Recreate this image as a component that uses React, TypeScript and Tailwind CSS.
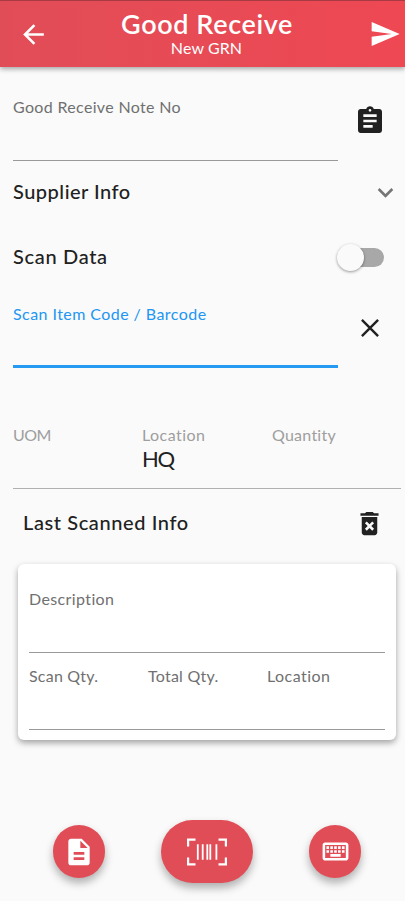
import React, { useState } from "react";
import {
  MdArrowBack,
  MdAssignment,
  MdDeleteForever,
  MdDescription,
  MdExpandMore,
  MdOutlineKeyboard,
  MdSend,
} from "react-icons/md";

interface FieldLabelProps {
  text: string;
  className: string;
}

const FieldLabel: React.FC<FieldLabelProps> = ({ text, className }) => (
  <span className={`block h-5 whitespace-nowrap text-[16px] leading-5 ${className}`}>{text}</span>
);

const ClearIcon = () => (
  <svg width="18" height="18" viewBox="0 0 18 18" fill="none" stroke="#212121" strokeWidth="2.4">
    <path d="M0.9 0.9L17.1 17.1M17.1 0.9L0.9 17.1" />
  </svg>
);

const BarcodeIcon = () => (
  <svg width="40" height="28" viewBox="0 0 40 28" fill="none" stroke="#fff">
    <path d="M1.1 8.5V1.6H8.5M31.5 1.6H38.9V8.5M38.9 19.5V26.4H31.5M8.5 26.4H1.1V19.5" strokeWidth="2.2" />
    <path d="M10.8 6.3V21.7M15.7 6.3V21.7M20.3 6.3V21.7M23.3 6.3V21.7M29.4 6.3V21.7" strokeWidth="1.8" />
  </svg>
);

export default function App() {
  const [scanData, setScanData] = useState(false);

  return (
    <div className="flex h-[901px] w-[405px] flex-col overflow-hidden bg-[#fafafa] font-['Lato',sans-serif] text-[#212121]">
      {/* App bar */}
      <header className="flex h-[67px] shrink-0 items-center border-t border-[#a83a43] bg-linear-to-r from-[#e14d57] to-[#ee4853] pr-1 pl-[17px] text-white shadow-[0_2px_5px_rgba(0,0,0,0.35)]">
        <button className="flex w-8 justify-center" aria-label="Back">
          <MdArrowBack size={31} />
        </button>
        <div className="flex flex-1 flex-col items-center pr-[4px] pb-[3px]">
          <h1 className="h-[31px] text-[27px] leading-[31px] font-semibold tracking-[0.6px] whitespace-nowrap">Good Receive</h1>
          <p className="h-[18px] pr-[1px] text-[16px] leading-[18px] tracking-[0.1px]">New GRN</p>
        </div>
        <button className="flex w-8 justify-center" aria-label="Send">
          <MdSend size={32} />
        </button>
      </header>

      <main className="flex flex-1 flex-col">
        {/* Note number */}
        <div className="flex h-[94px] shrink-0 pl-[13px]">
          <div className="w-[325px] border-b border-[#999] pt-[30px]">
            <FieldLabel text="Good Receive Note No" className="tracking-[0.33px] text-[#707070]" />
          </div>
          <button className="mt-[38px] ml-[15.5px] flex h-8 w-8 justify-center" aria-label="Notes">
            <MdAssignment size={32} />
          </button>
        </div>

        <button className="flex h-[64px] shrink-0 items-center justify-between pr-1 pb-[1px] pl-[13px]">
          <span className="pb-[3px] text-[20px] font-medium tracking-[0.5px]">Supplier Info</span>
          <MdExpandMore size={31} className="text-[#757575]" />
        </button>

        <div className="flex h-[66px] shrink-0 items-center justify-between pr-[21px] pb-[2px] pl-[13px]">
          <span className="pb-[2px] text-[20px] font-medium tracking-[0.68px]">Scan Data</span>
          <button
            role="switch"
            aria-checked={scanData}
            aria-label="Scan Data"
            onClick={() => setScanData(!scanData)}
            className="flex h-[19px] w-[42px] items-center rounded-full bg-[#a8a8a8]"
          >
            <span
              className={`h-[27px] w-[27px] shrink-0 rounded-full bg-[#fafafa] shadow-[0_1px_3px_rgba(0,0,0,0.4)] ${scanData ? "ml-[20px]" : "-ml-[5px]"}`}
            />
          </button>
        </div>

        {/* Barcode entry */}
        <div className="flex h-[77px] shrink-0 pl-[13px]">
          <div className="w-[325px] border-b-[3px] border-[#2699f2] pt-[13px]">
            <FieldLabel text="Scan Item Code / Barcode" className="tracking-[0.44px] text-[#2196f3]" />
          </div>
          <button className="mt-[28px] ml-[22px] flex h-[18px] w-[19px] justify-center" aria-label="Clear">
            <ClearIcon />
          </button>
        </div>

        <div className="mr-1 ml-[13px] flex h-[121px] shrink-0 border-b border-[#b0b0b0] pt-[57px] text-[#9e9e9e]">
          <div className="w-[129px]">
            <FieldLabel text="UOM" className="tracking-[-0.5px]" />
          </div>
          <div className="w-[130px]">
            <FieldLabel text="Location" className="tracking-[0.45px]" />
            <span className="block text-[22px] leading-7 tracking-[-1.2px] text-[#212121]">HQ</span>
          </div>
          <FieldLabel text="Quantity" className="tracking-[0.25px]" />
        </div>

        <div className="flex h-[69px] shrink-0 items-center justify-between pr-5 pl-[23px]">
          <h2 className="pb-[3px] text-[20px] font-medium tracking-[0.6px]">Last Scanned Info</h2>
          <button aria-label="Delete scanned item">
            <MdDeleteForever size={31} />
          </button>
        </div>

        {/* Last scanned card */}
        <section className="mt-[6px] mr-[9px] ml-[18px] flex h-[176px] shrink-0 flex-col rounded-[6px] bg-white px-[11px] text-[#707070] shadow-[0_3px_6px_rgba(0,0,0,0.35)]">
          <div className="h-[89px] border-b border-[#999] pt-[25px]">
            <FieldLabel text="Description" className="tracking-[0.38px]" />
          </div>
          <div className="flex h-[77px] border-b border-[#999] pt-[13px]">
            <FieldLabel text="Scan Qty." className="w-[119px] tracking-[0.22px]" />
            <FieldLabel text="Total Qty." className="w-[119px] tracking-[0.25px]" />
            <FieldLabel text="Location" className="tracking-[0.45px]" />
          </div>
        </section>

        <nav className="mt-[80px] flex h-[63px] shrink-0 items-center justify-between pr-11 pl-[53px] text-white">
          <button className="flex h-[53px] w-[52px] items-center justify-center rounded-full bg-[#e14d57] shadow-[0_5px_9px_rgba(0,0,0,0.3)]" aria-label="Document">
            <MdDescription size={32} />
          </button>
          <button className="flex h-[63px] w-[92px] items-center justify-center rounded-full bg-[#e14d57] shadow-[0_5px_9px_rgba(0,0,0,0.3)]" aria-label="Scan barcode">
            <BarcodeIcon />
          </button>
          <button className="flex h-[53px] w-[52px] items-center justify-center rounded-full bg-[#e14d57] shadow-[0_5px_9px_rgba(0,0,0,0.3)]" aria-label="Keyboard">
            <MdOutlineKeyboard size={31} />
          </button>
        </nav>
      </main>
    </div>
  );
}
